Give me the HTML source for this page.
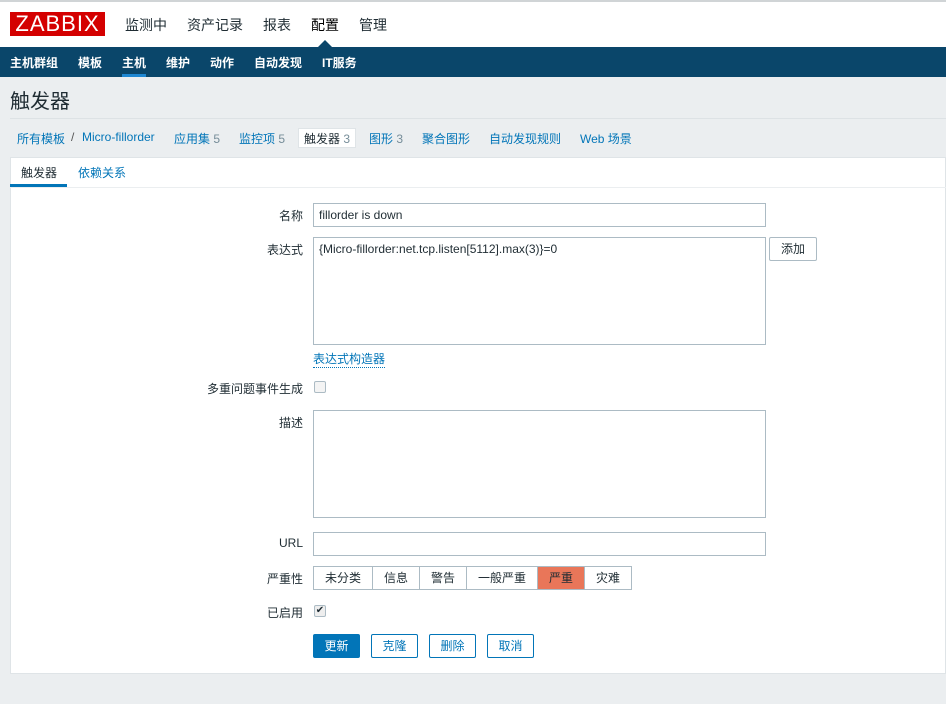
<!DOCTYPE html>
<html><head><meta charset="utf-8"><style>
*{box-sizing:border-box;margin:0;padding:0}
body{width:946px;height:704px;background:#ebeef0;font-family:"Liberation Sans","Noto Sans CJK SC",sans-serif;font-size:12px;color:#1f2c33;position:relative;overflow:hidden}
.a{position:absolute}
.top{left:0;top:0;width:946px;height:47px;background:#fff;border-top:2px solid #d0d4d6}
.logo{left:10px;top:12px;width:95px;height:24px;background:#d40000;color:#fff;font-size:22px;line-height:24px;text-align:center;letter-spacing:1px}
.m{top:15px;font-size:14px;color:#1f2c33}
.nav{left:0;top:47px;width:946px;height:30px;background:#0a466a}
.n{top:54px;color:#fff;font-size:12px;font-weight:bold}
.lbl{right:643px;text-align:right;font-size:12px}
.in{left:313px;width:453px;border:1px solid #acbbc4;background:#fff;padding:4px 5px}
.sev{top:566px;height:24px;border:1px solid #acbbc4;background:#fff;text-align:center;line-height:22px}
.btn{top:634px;height:24px;width:47px;border:1px solid #0275b8;color:#0275b8;background:#fff;text-align:center;line-height:22px;border-radius:2px}
a,.lk{color:#0275b8}
</style></head><body>
<div class="a top"></div>
<div class="a logo">ZABBIX</div>
<div class="a m" style="left:125px">监测中</div>
<div class="a m" style="left:187px">资产记录</div>
<div class="a m" style="left:263px">报表</div>
<div class="a m" style="left:311px;color:#000">配置</div>
<div class="a m" style="left:359px">管理</div>
<div class="a" style="left:318px;top:40px;width:0;height:0;border-left:7px solid transparent;border-right:7px solid transparent;border-bottom:7px solid #0a466a"></div>
<div class="a nav"></div>
<div class="a n" style="left:10px">主机群组</div>
<div class="a n" style="left:78px">模板</div>
<div class="a n" style="left:122px">主机</div>
<div class="a" style="left:122px;top:74px;width:24px;height:3px;background:#1e87d2"></div>
<div class="a n" style="left:166px">维护</div>
<div class="a n" style="left:210px">动作</div>
<div class="a n" style="left:254px">自动发现</div>
<div class="a n" style="left:322px">IT服务</div>
<div class="a" style="left:10px;top:85px;font-size:20px">触发器</div>
<div class="a" style="left:10px;top:118px;width:936px;height:1px;background:#dde2e5"></div>
<div class="a lk" style="left:17px;top:130px">所有模板</div>
<div class="a" style="left:71px;top:130px;color:#555">/</div>
<div class="a lk" style="left:82px;top:130px">Micro-fillorder</div>
<div class="a lk" style="left:174px;top:130px">应用集 <span style="color:#768d99">5</span></div>
<div class="a lk" style="left:239px;top:130px">监控项 <span style="color:#768d99">5</span></div>
<div class="a" style="left:298px;top:128px;width:58px;height:20px;background:#fff;border:1px solid #dfe4e7"></div>
<div class="a" style="left:304px;top:130px">触发器 <span style="color:#768d99">3</span></div>
<div class="a lk" style="left:369px;top:130px">图形 <span style="color:#768d99">3</span></div>
<div class="a lk" style="left:422px;top:130px">聚合图形</div>
<div class="a lk" style="left:489px;top:130px">自动发现规则</div>
<div class="a lk" style="left:580px;top:130px">Web 场景</div>
<div class="a" style="left:10px;top:157px;width:936px;height:517px;background:#fff;border:1px solid #dfe4e7"></div>
<div class="a" style="left:10px;top:187px;width:936px;height:1px;background:#ebeef0"></div>
<div class="a" style="left:21px;top:164px">触发器</div>
<div class="a" style="left:10px;top:184px;width:57px;height:3px;background:#0275b8"></div>
<div class="a lk" style="left:78px;top:164px">依赖关系</div>
<div class="a lbl" style="top:207px">名称</div>
<div class="a in" style="top:203px;height:24px">fillorder is down</div>
<div class="a lbl" style="top:241px">表达式</div>
<div class="a in" style="top:237px;height:108px">{Micro-fillorder:net.tcp.listen[5112].max(3)}=0</div>
<div class="a" style="left:769px;top:237px;width:48px;height:24px;border:1px solid #acbbc4;border-radius:2px;text-align:center;line-height:22px">添加</div>
<div class="a lk" style="left:313px;top:350px;border-bottom:1px dotted #0275b8">表达式构造器</div>
<div class="a lbl" style="top:380px">多重问题事件生成</div>
<div class="a" style="left:314px;top:381px;width:12px;height:12px;border:1px solid #acbbc4;border-radius:2px;background:#f4f4f4"></div>
<div class="a lbl" style="top:414px">描述</div>
<div class="a in" style="top:410px;height:108px"></div>
<div class="a lbl" style="top:536px">URL</div>
<div class="a in" style="top:532px;height:24px"></div>
<div class="a lbl" style="top:570px">严重性</div>
<div class="a sev" style="left:313px;width:60px">未分类</div>
<div class="a sev" style="left:372px;width:48px">信息</div>
<div class="a sev" style="left:419px;width:48px">警告</div>
<div class="a sev" style="left:466px;width:72px">一般严重</div>
<div class="a sev" style="left:537px;width:48px;background:#e97659">严重</div>
<div class="a sev" style="left:584px;width:48px">灾难</div>
<div class="a lbl" style="top:604px">已启用</div>
<div class="a" style="left:314px;top:605px;width:12px;height:12px;border:1px solid #acbbc4;border-radius:2px;background:#eee;font-size:10px;line-height:10px;text-align:center">✔</div>
<div class="a btn" style="left:313px;background:#0275b8;color:#fff">更新</div>
<div class="a btn" style="left:371px">克隆</div>
<div class="a btn" style="left:429px">删除</div>
<div class="a btn" style="left:487px">取消</div>
</body></html>
